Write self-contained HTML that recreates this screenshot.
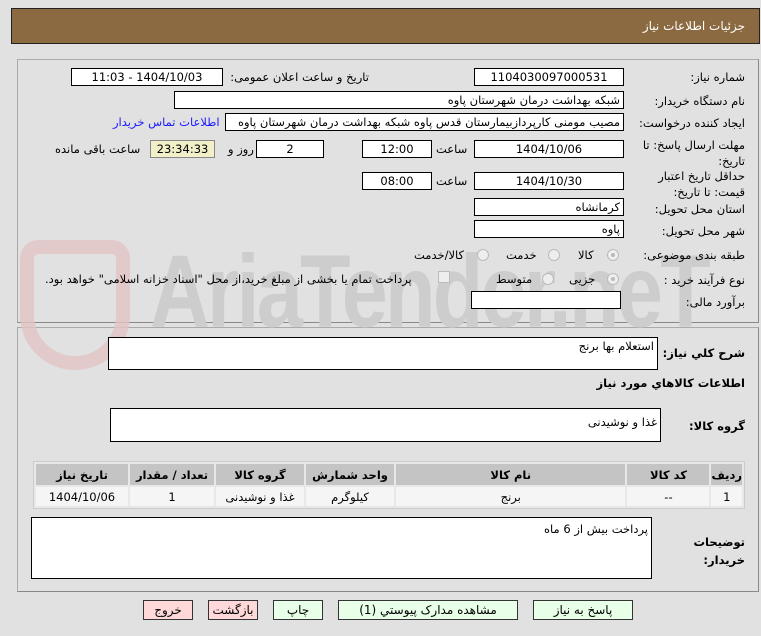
<!DOCTYPE html>
<html><head><meta charset="utf-8"><style>
body{margin:0;width:761px;height:636px;background:#e1e1e1;font-family:Tahoma,"DejaVu Sans","Liberation Sans",sans-serif;font-size:11.5px;position:relative;overflow:hidden;color:#000}
.a{position:absolute}
.hdr{left:11px;top:8px;width:747px;height:34px;background:#8b6a41;border:1px solid #222}
.hdr span{position:absolute;right:14px;top:10px;color:#fff;font-size:12px}
.pn{border:1px solid #aaa;border-right-color:#888;border-bottom-color:#888}
.in{background:#fff;border:1px solid #000;box-sizing:border-box;height:18px;line-height:16px;text-align:center;direction:rtl;white-space:nowrap;overflow:hidden}
.l{direction:rtl;white-space:nowrap}
.lt{text-align:right;padding-right:3px}
.rad{width:12px;height:12px;border-radius:50%;border:1px solid #bbb;background:#eee;box-sizing:border-box}
.rad.on::after{content:"";position:absolute;left:3px;top:3px;width:4px;height:4px;border-radius:50%;background:#bbb}
table{border-collapse:separate;border-spacing:2px;background:#e8e8e8;border:1px solid #ccc}
th{background:#c4c4c4;font-weight:bold;height:21px;font-size:11.5px;padding:0}
td{background:#f5f5f5;height:19px;text-align:center;padding:0}
.btn{box-sizing:border-box;height:20px;border:1px solid #333;text-align:center;line-height:18px;font-size:12px}
.wmc{left:0;top:220px;width:761px;height:130px;overflow:hidden}
.wm{font-family:"Liberation Sans",sans-serif;font-size:90px;font-weight:bold;color:#cdcdcd;letter-spacing:-3px;left:150px;top:20px;transform:scale(0.92,1.15);transform-origin:left top;white-space:nowrap;line-height:90px}
</style></head><body>
<div class="a hdr"><span>جزئیات اطلاعات نیاز</span></div>
<div class="a pn" style="left:17px;top:59px;width:740px;height:262px"></div>
<div class="a pn" style="left:17px;top:327px;width:740px;height:263px"></div>
<div class="a wmc"><div class="a wm">AriaTender.neT</div></div>
<div class="a" style="left:20px;top:240px;width:110px;height:130px;border:14px solid #e4c4c4;border-radius:20px 20px 60px 60px;box-sizing:border-box;opacity:.8"></div>

<div class="a l" style="right:16px;top:70px">شماره نیاز:</div>
<div class="a in" style="left:474px;top:68px;width:150px">1104030097000531</div>
<div class="a l" style="right:392px;top:70px">تاریخ و ساعت اعلان عمومی:</div>
<div class="a in" style="left:71px;top:68px;width:152px">1404/10/03 - 11:03</div>

<div class="a l" style="right:16px;top:94px">نام دستگاه خریدار:</div>
<div class="a in lt" style="left:174px;top:91px;width:450px">شبکه بهداشت درمان شهرستان پاوه</div>

<div class="a l" style="right:16px;top:116px">ایجاد کننده درخواست:</div>
<div class="a in lt" style="left:225px;top:113px;width:399px">مصیب مومنی کارپردازبیمارستان قدس پاوه شبکه بهداشت درمان شهرستان پاوه</div>
<div class="a l" style="left:113px;top:115px;color:#1a1aff">اطلاعات تماس خریدار</div>

<div class="a l" style="right:16px;top:137px;text-align:right;line-height:16px">مهلت ارسال پاسخ: تا<br>تاریخ:</div>
<div class="a in" style="left:474px;top:140px;width:150px">1404/10/06</div>
<div class="a l" style="left:436px;top:142px">ساعت</div>
<div class="a in" style="left:362px;top:140px;width:70px">12:00</div>
<div class="a in" style="left:256px;top:140px;width:68px">2</div>
<div class="a l" style="left:228px;top:142px">روز و</div>
<div class="a in" style="left:150px;top:140px;width:65px;background:#f1f0c8;border-color:#888">23:34:33</div>
<div class="a l" style="left:55px;top:142px">ساعت باقی مانده</div>

<div class="a l" style="right:16px;top:168px;text-align:right;line-height:16px">حداقل تاریخ اعتبار<br>قیمت: تا تاریخ:</div>
<div class="a in" style="left:474px;top:172px;width:150px">1404/10/30</div>
<div class="a l" style="left:436px;top:174px">ساعت</div>
<div class="a in" style="left:362px;top:172px;width:70px">08:00</div>

<div class="a l" style="right:16px;top:202px">استان محل تحویل:</div>
<div class="a in lt" style="left:474px;top:198px;width:150px">کرمانشاه</div>
<div class="a l" style="right:16px;top:224px">شهر محل تحویل:</div>
<div class="a in lt" style="left:474px;top:220px;width:150px">پاوه</div>

<div class="a l" style="right:16px;top:248px">طبقه بندی موضوعی:</div>
<div class="a rad on" style="left:607px;top:249px"></div><div class="a l" style="left:578px;top:248px">کالا</div>
<div class="a rad" style="left:548px;top:249px"></div><div class="a l" style="left:506px;top:248px">خدمت</div>
<div class="a rad" style="left:477px;top:249px"></div><div class="a l" style="left:414px;top:248px">کالا/خدمت</div>

<div class="a l" style="right:16px;top:273px">نوع فرآیند خرید :</div>
<div class="a rad on" style="left:607px;top:273px"></div><div class="a l" style="left:569px;top:272px">جزیی</div>
<div class="a rad" style="left:542px;top:273px"></div><div class="a l" style="left:496px;top:272px">متوسط</div>
<div class="a" style="left:438px;top:271px;width:12px;height:12px;border:1px solid #bbb;background:#eee;box-sizing:border-box"></div>
<div class="a l" style="left:45px;top:272px">پرداخت تمام یا بخشی از مبلغ خرید،از محل "اسناد خزانه اسلامی" خواهد بود.</div>

<div class="a l" style="right:16px;top:295px">برآورد مالی:</div>
<div class="a in" style="left:471px;top:291px;width:150px"></div>

<div class="a l" style="right:16px;top:346px;font-weight:bold">شرح کلي نياز:</div>
<div class="a in lt" style="left:108px;top:337px;width:550px;height:33px;text-align:right">استعلام بها برنج</div>
<div class="a l" style="right:16px;top:376px;font-weight:bold">اطلاعات کالاهاي مورد نياز</div>
<div class="a l" style="right:16px;top:419px;font-weight:bold">گروه کالا:</div>
<div class="a in lt" style="left:110px;top:408px;width:551px;height:34px;line-height:26px">غذا و نوشیدنی</div>

<table class="a" style="left:33px;top:461px;width:712px;direction:rtl">
<tr><th style="width:28px">ردیف</th><th style="width:82px">کد کالا</th><th>نام کالا</th><th style="width:88px">واحد شمارش</th><th style="width:88px">گروه کالا</th><th style="width:84px">تعداد / مقدار</th><th style="width:92px">تاریخ نیاز</th></tr>
<tr><td>1</td><td>--</td><td>برنج</td><td>کیلوگرم</td><td>غذا و نوشیدنی</td><td>1</td><td>1404/10/06</td></tr>
</table>

<div class="a l" style="right:16px;top:533px;font-weight:bold;text-align:right;line-height:18px">توضیحات<br>خریدار:</div>
<div class="a in lt" style="left:31px;top:517px;width:621px;height:62px;line-height:22px">پرداخت بیش از 6 ماه</div>

<div class="a btn" style="left:533px;top:600px;width:100px;background:#e8ffe8">پاسخ به نیاز</div>
<div class="a btn" style="left:338px;top:600px;width:180px;background:#e8ffe8">مشاهده مدارک پیوستي (1)</div>
<div class="a btn" style="left:273px;top:600px;width:50px;background:#e8ffe8">چاپ</div>
<div class="a btn" style="left:208px;top:600px;width:50px;background:#ffd9d9">بازگشت</div>
<div class="a btn" style="left:143px;top:600px;width:50px;background:#ffd9d9">خروج</div>
</body></html>
